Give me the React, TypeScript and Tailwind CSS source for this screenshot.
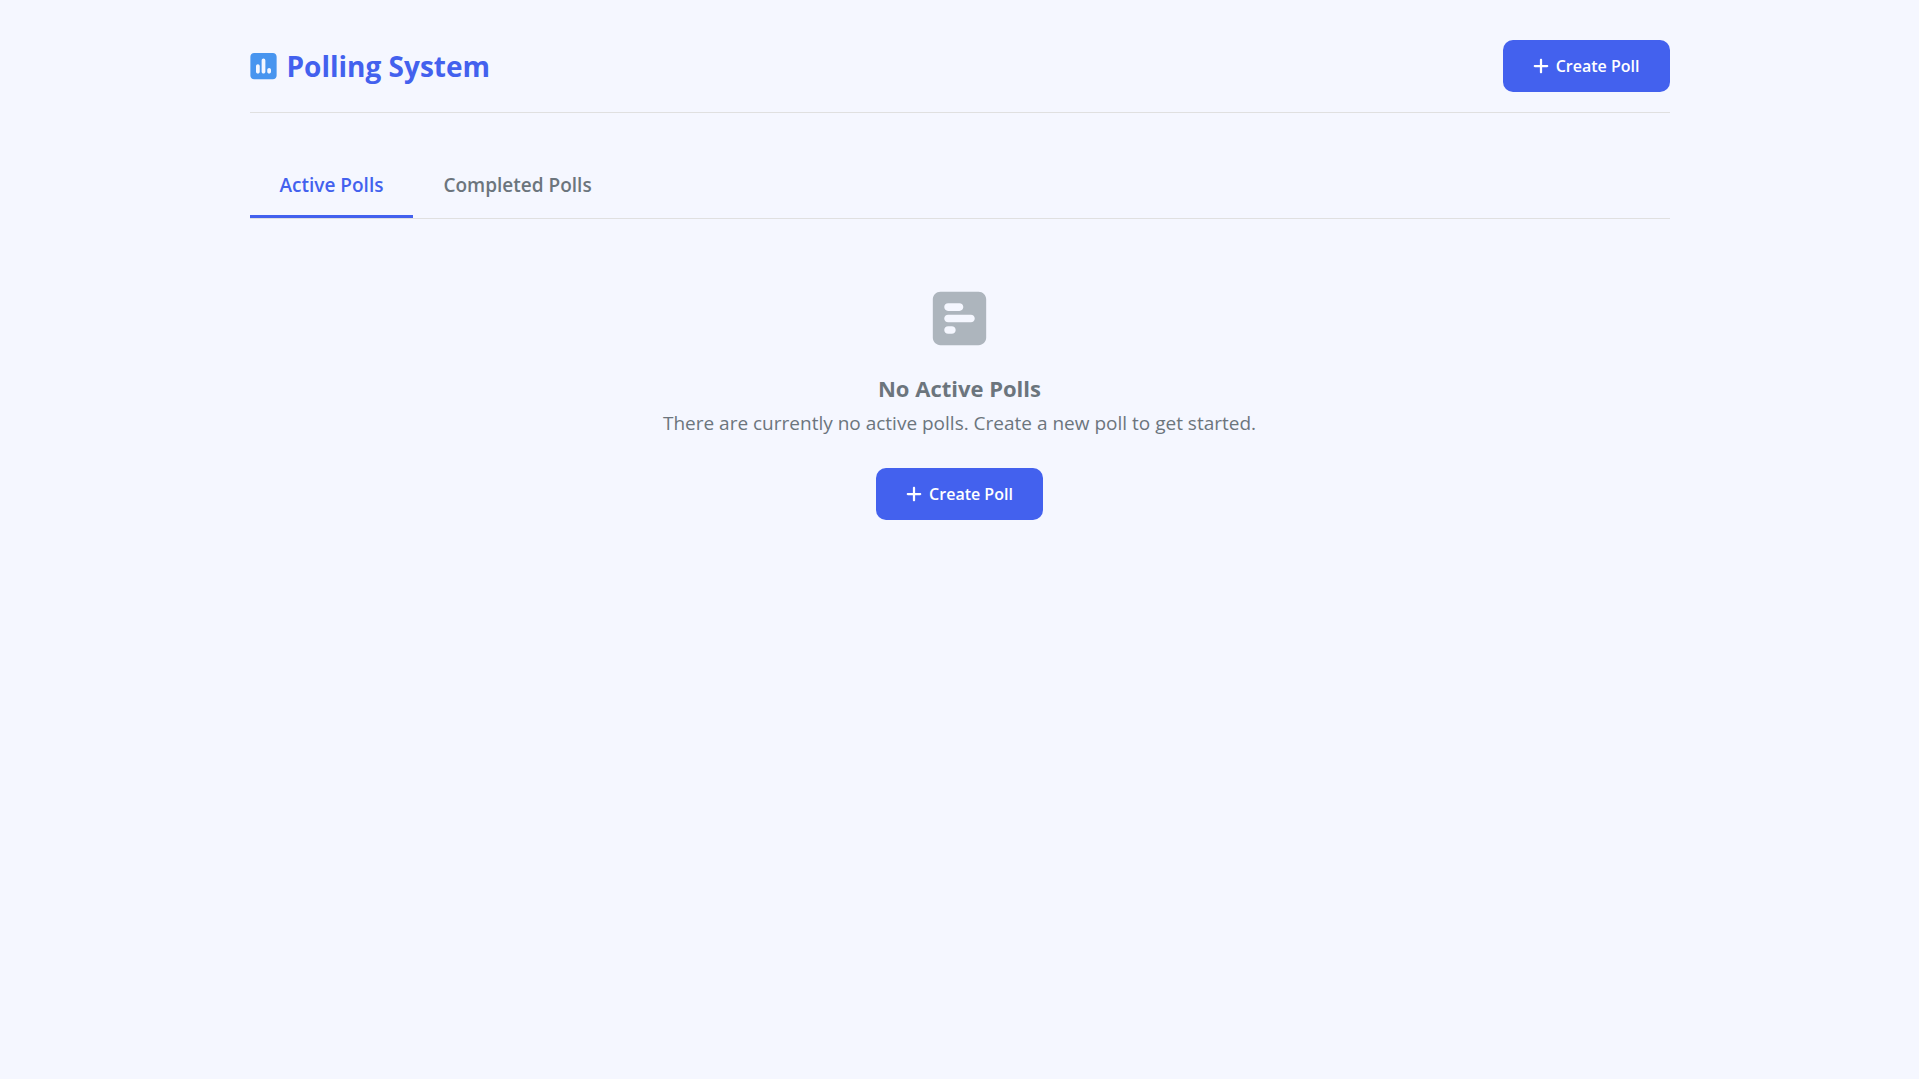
import { useState } from "react";
import { FaPlus, FaSquarePollHorizontal, FaSquarePollVertical } from "react-icons/fa6";

function CreatePollButton() {
  return (
    <button
      type="button"
      className="inline-flex h-[52px] cursor-pointer items-center gap-[7px] rounded-[10px] bg-[#4361ee] px-[30px] text-[16px] font-semibold text-white"
    >
      <FaPlus className="h-[18px] w-4" aria-hidden="true" />
      <span>Create Poll</span>
    </button>
  );
}

const tabs = [
  { id: "active", label: "Active Polls" },
  { id: "completed", label: "Completed Polls" },
];

export default function App() {
  const [selected, setSelected] = useState("active");

  return (
    <div className="min-h-screen bg-[#f5f7ff] font-['Segoe_UI','Open_Sans',sans-serif] text-[#6c757d]">
      <div className="mx-auto max-w-[1500px] px-10 py-10">
        <header className="flex items-center justify-between border-b border-[#e0e0e0] pb-5">
          <h1 className="flex items-center gap-2.5 text-[28px] leading-10 font-bold text-[#4361ee]">
            <FaSquarePollVertical className="h-[30px] w-[27px] text-[#4895ef]" aria-hidden="true" />
            Polling System
          </h1>
          <CreatePollButton />
        </header>

        <div role="tablist" className="mt-10 flex border-b border-[#e0e0e0]">
          {tabs.map((tab) => (
            <button
              key={tab.id}
              type="button"
              role="tab"
              aria-selected={selected === tab.id}
              onClick={() => setSelected(tab.id)}
              className="cursor-pointer border-b-3 border-transparent px-[30px] pt-[19px] pb-[17px] text-[19px] leading-[26px] font-semibold aria-selected:border-[#4361ee] aria-selected:text-[#4361ee]"
            >
              {tab.label}
            </button>
          ))}
        </div>

        <main className="flex flex-col items-center pt-[69px] text-center">
          <FaSquarePollHorizontal className="size-[61px] text-[#adb5bd]" aria-hidden="true" />
          <h2 className="mt-[21px] text-[22px] leading-9 font-bold">No Active Polls</h2>
          <p className="mb-7 text-[19px] leading-[34px]">
            There are currently no active polls. Create a new poll to get started.
          </p>
          <CreatePollButton />
        </main>
      </div>
    </div>
  );
}
